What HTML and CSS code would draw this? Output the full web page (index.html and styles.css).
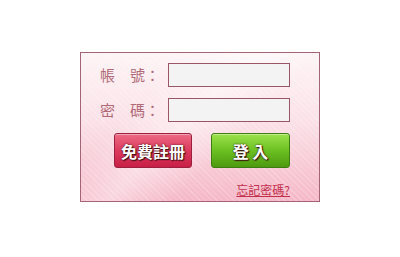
FILE: index.html
```html
<!DOCTYPE html>
<html lang="zh-Hant">
<head>
  <meta charset="UTF-8">
  <title>登入</title>
  <link rel="stylesheet" href="styles.css">
</head>
<body>
  <div class="login">
    <div class="row">
      <label class="label" for="account">帳　號：</label>
      <input class="field" type="text" id="account">
    </div>
    <div class="row">
      <label class="label" for="password">密　碼：</label>
      <input class="field" type="password" id="password">
    </div>
    <div class="actions">
      <button class="btn btn-red">免費註冊</button>
      <button class="btn btn-green">登 入</button>
    </div>
    <div class="forgot">
      <a href="#">忘記密碼?</a>
    </div>
  </div>
</body>
</html>
```

FILE: styles.css
```css
body {
  margin: 0;
  background: #ffffff;
  font-family: "Noto Sans CJK TC", "Liberation Sans", sans-serif;
}
.login {
  box-sizing: border-box;
  width: 240px;
  height: 150px;
  margin: 52px 0 0 80px;
  padding: 10px 0 0 19px;
  border: 1px solid #a36478;
  background:
    linear-gradient(135deg, rgba(255,255,255,0) 0%, rgba(255,255,255,0) 28%, rgba(255,255,255,0.4) 45%, rgba(255,255,255,0) 62%),
    repeating-linear-gradient(45deg, rgba(255,255,255,0.2) 0 1px, rgba(255,255,255,0) 1px 4px),
    linear-gradient(180deg, #fdf4f6 0%, #fbe2e8 45%, #f5b8c8 100%);
}
.row {
  display: flex;
  align-items: center;
  height: 24px;
  margin-bottom: 11px;
}
.label {
  width: 68px;
  font-size: 15px;
  color: #b06a78;
  line-height: 24px;
}
.field {
  box-sizing: border-box;
  width: 122px;
  height: 24px;
  margin: 0;
  border: 1px solid #9a5566;
  background: #f4f3f3;
}
.actions {
  display: flex;
  gap: 19px;
  padding-left: 14px;
}
.btn {
  height: 35px;
  border-radius: 3px;
  color: #ffffff;
  font-family: "Noto Sans CJK TC", sans-serif;
  font-size: 16px;
  font-weight: bold;
  text-shadow: 0 0 2px #3a1010, 1px 1px 1px #3a1010;
  cursor: pointer;
}
.btn-red {
  width: 78px;
  border: 1px solid #9c1f3f;
  background: linear-gradient(180deg, #ec6a85 0%, #dc3a5c 50%, #c81f47 100%);
  box-shadow: inset 0 1px 0 rgba(255,255,255,0.4);
}
.btn-green {
  width: 79px;
  border: 1px solid #3e7d12;
  background: linear-gradient(180deg, #9ce24a 0%, #6cc022 50%, #4d9a10 100%);
  box-shadow: inset 0 1px 0 rgba(255,255,255,0.4);
}
.forgot {
  text-align: right;
  padding-right: 29px;
  margin-top: 8px;
}
.forgot a {
  font-size: 12px;
  color: #c2304c;
}
```
